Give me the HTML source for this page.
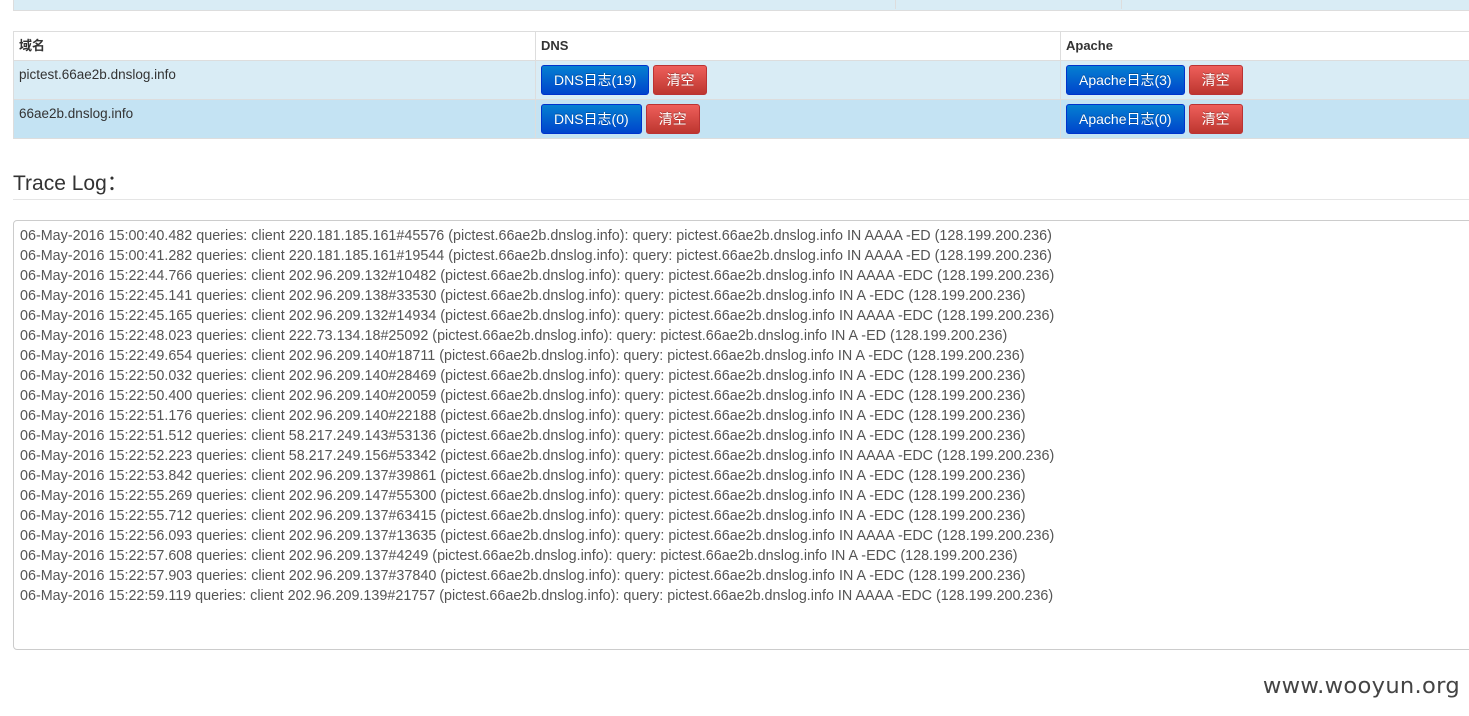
<!DOCTYPE html>
<html><head><meta charset="utf-8"><style>
body{margin:0;width:1469px;height:716px;overflow:hidden;background:#fff;font-family:"Liberation Sans","Noto Sans CJK SC",sans-serif;color:#333;position:relative}
.a{position:absolute}
.top{left:13px;top:-2px;width:1470px;height:12px;background:#d9ecf5;border:1px solid #ddd;border-top:0}
.vl{position:absolute;top:0;width:1px;height:11px;background:#ddd}
table{position:absolute;left:13px;top:31px;width:1470px;border-collapse:collapse;font-size:13px}
td,th{border:1px solid #ddd;padding:0 0 0 5px;text-align:left;vertical-align:top}
th{height:28px;line-height:28px;font-weight:bold;font-size:13px;color:#333;background:#fff}
tr.r1 td{background:#d9ecf5}
tr.r2 td{background:#c4e3f3}
.c{height:38px;display:flex;align-items:flex-start;padding-top:4px;box-sizing:border-box}
.t{height:38px;padding-top:6px;box-sizing:border-box;font-size:13.5px;color:#333;line-height:16px}
.b{display:block;height:30px;line-height:29px;border-radius:3px;color:#fff;font-size:14px;padding:0 12px;margin-right:4px;box-sizing:border-box;text-shadow:0 -1px 0 rgba(0,0,0,.25)}
.p{background:linear-gradient(#0480d1,#0044cc);border:1px solid #03c}
.d{background:linear-gradient(#ee5f5b,#bd362f);border:1px solid #b33}
h3{position:absolute;left:13px;top:167px;margin:0;font-weight:normal;font-size:21px;color:#333}
.hr{left:13px;top:199px;width:1460px;height:1px;background:#e5e5e5}
.log{left:13px;top:220px;width:1470px;height:430px;border:1px solid #ccc;border-radius:4px;padding:5px 6px;box-sizing:border-box;font-size:14.35px;line-height:20px;color:#555;white-space:pre}
.wm{right:9px;top:673px;font-size:22.6px;color:#444;font-family:"DejaVu Sans",sans-serif;letter-spacing:0.3px}
</style></head><body>
<div class="a top"><div class="vl" style="left:881px"></div><div class="vl" style="left:1107px"></div></div>
<table>
<tr><th style="width:516px">域名</th><th style="width:519px">DNS</th><th>Apache</th></tr>
<tr class="r1"><td><div class="t">pictest.66ae2b.dnslog.info</div></td><td><div class="c"><span class="b p">DNS日志(19)</span><span class="b d">清空</span></div></td><td><div class="c"><span class="b p">Apache日志(3)</span><span class="b d">清空</span></div></td></tr>
<tr class="r2"><td><div class="t">66ae2b.dnslog.info</div></td><td><div class="c"><span class="b p">DNS日志(0)</span><span class="b d">清空</span></div></td><td><div class="c"><span class="b p">Apache日志(0)</span><span class="b d">清空</span></div></td></tr>
</table>
<h3>Trace Log：</h3>
<div class="a hr"></div>
<div class="a log">06-May-2016 15:00:40.482 queries: client 220.181.185.161#45576 (pictest.66ae2b.dnslog.info): query: pictest.66ae2b.dnslog.info IN AAAA -ED (128.199.200.236)
06-May-2016 15:00:41.282 queries: client 220.181.185.161#19544 (pictest.66ae2b.dnslog.info): query: pictest.66ae2b.dnslog.info IN AAAA -ED (128.199.200.236)
06-May-2016 15:22:44.766 queries: client 202.96.209.132#10482 (pictest.66ae2b.dnslog.info): query: pictest.66ae2b.dnslog.info IN AAAA -EDC (128.199.200.236)
06-May-2016 15:22:45.141 queries: client 202.96.209.138#33530 (pictest.66ae2b.dnslog.info): query: pictest.66ae2b.dnslog.info IN A -EDC (128.199.200.236)
06-May-2016 15:22:45.165 queries: client 202.96.209.132#14934 (pictest.66ae2b.dnslog.info): query: pictest.66ae2b.dnslog.info IN AAAA -EDC (128.199.200.236)
06-May-2016 15:22:48.023 queries: client 222.73.134.18#25092 (pictest.66ae2b.dnslog.info): query: pictest.66ae2b.dnslog.info IN A -ED (128.199.200.236)
06-May-2016 15:22:49.654 queries: client 202.96.209.140#18711 (pictest.66ae2b.dnslog.info): query: pictest.66ae2b.dnslog.info IN A -EDC (128.199.200.236)
06-May-2016 15:22:50.032 queries: client 202.96.209.140#28469 (pictest.66ae2b.dnslog.info): query: pictest.66ae2b.dnslog.info IN A -EDC (128.199.200.236)
06-May-2016 15:22:50.400 queries: client 202.96.209.140#20059 (pictest.66ae2b.dnslog.info): query: pictest.66ae2b.dnslog.info IN A -EDC (128.199.200.236)
06-May-2016 15:22:51.176 queries: client 202.96.209.140#22188 (pictest.66ae2b.dnslog.info): query: pictest.66ae2b.dnslog.info IN A -EDC (128.199.200.236)
06-May-2016 15:22:51.512 queries: client 58.217.249.143#53136 (pictest.66ae2b.dnslog.info): query: pictest.66ae2b.dnslog.info IN A -EDC (128.199.200.236)
06-May-2016 15:22:52.223 queries: client 58.217.249.156#53342 (pictest.66ae2b.dnslog.info): query: pictest.66ae2b.dnslog.info IN AAAA -EDC (128.199.200.236)
06-May-2016 15:22:53.842 queries: client 202.96.209.137#39861 (pictest.66ae2b.dnslog.info): query: pictest.66ae2b.dnslog.info IN A -EDC (128.199.200.236)
06-May-2016 15:22:55.269 queries: client 202.96.209.147#55300 (pictest.66ae2b.dnslog.info): query: pictest.66ae2b.dnslog.info IN A -EDC (128.199.200.236)
06-May-2016 15:22:55.712 queries: client 202.96.209.137#63415 (pictest.66ae2b.dnslog.info): query: pictest.66ae2b.dnslog.info IN A -EDC (128.199.200.236)
06-May-2016 15:22:56.093 queries: client 202.96.209.137#13635 (pictest.66ae2b.dnslog.info): query: pictest.66ae2b.dnslog.info IN AAAA -EDC (128.199.200.236)
06-May-2016 15:22:57.608 queries: client 202.96.209.137#4249 (pictest.66ae2b.dnslog.info): query: pictest.66ae2b.dnslog.info IN A -EDC (128.199.200.236)
06-May-2016 15:22:57.903 queries: client 202.96.209.137#37840 (pictest.66ae2b.dnslog.info): query: pictest.66ae2b.dnslog.info IN A -EDC (128.199.200.236)
06-May-2016 15:22:59.119 queries: client 202.96.209.139#21757 (pictest.66ae2b.dnslog.info): query: pictest.66ae2b.dnslog.info IN AAAA -EDC (128.199.200.236)</div>
<div class="a wm">www.wooyun.org</div>
</body></html>
